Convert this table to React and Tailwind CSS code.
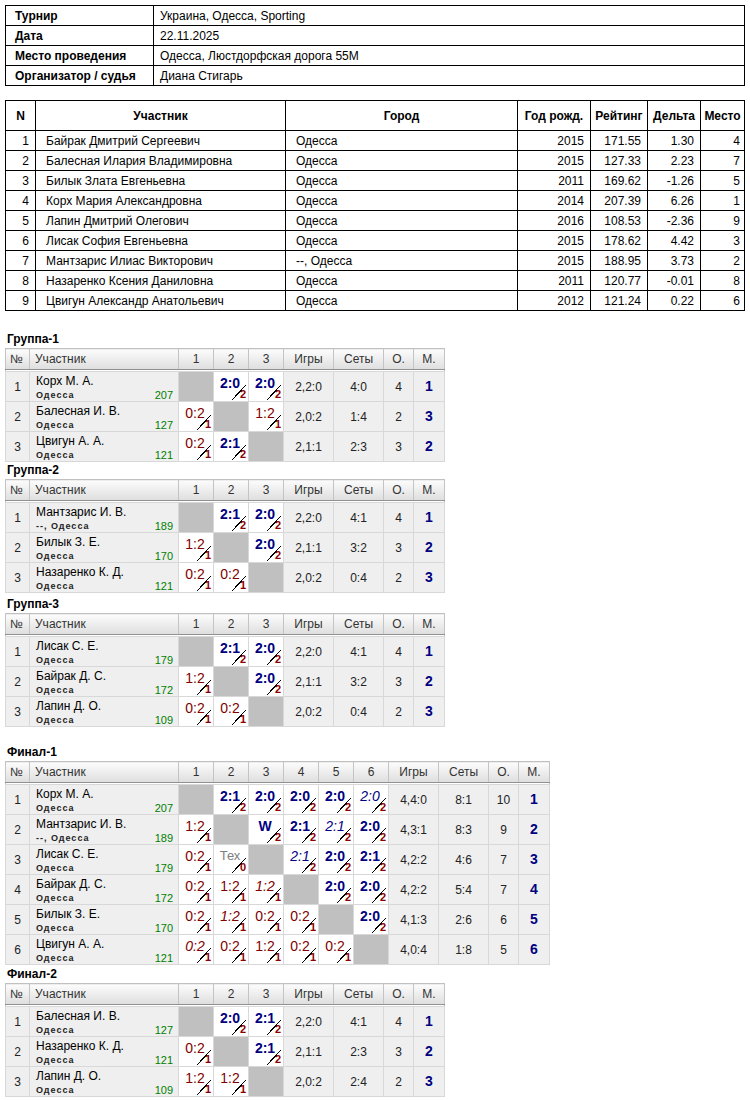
import React from "react";

const players = [
  [1, "Байрак Дмитрий Сергеевич", "Одесса", "2015", "171.55", "1.30", "4"],
  [2, "Балесная Илария Владимировна", "Одесса", "2015", "127.33", "2.23", "7"],
  [3, "Билык Злата Евгеньевна", "Одесса", "2011", "169.62", "-1.26", "5"],
  [4, "Корх Мария Александровна", "Одесса", "2014", "207.39", "6.26", "1"],
  [5, "Лапин Дмитрий Олегович", "Одесса", "2016", "108.53", "-2.36", "9"],
  [6, "Лисак София Евгеньевна", "Одесса", "2015", "178.62", "4.42", "3"],
  [7, "Мантзарис Илиас Викторович", "--, Одесса", "2015", "188.95", "3.73", "2"],
  [8, "Назаренко Ксения Даниловна", "Одесса", "2011", "120.77", "-0.01", "8"],
  [9, "Цвигун Александр Анатольевич", "Одесса", "2012", "121.24", "0.22", "6"],
];

// cell codes: null = diagonal; [kind, text, points]
// kinds: W bold win, w italic win, L loss, l italic loss, T tech
const groups = [
  {
    title: "Группа-1",
    rows: [
      ["Корх М. А.", "Одесса", "207", [null, ["W", "2:0", "2"], ["W", "2:0", "2"]], "2,2:0", "4:0", "4", "1"],
      ["Балесная И. В.", "Одесса", "127", [["L", "0:2", "1"], null, ["L", "1:2", "1"]], "2,0:2", "1:4", "2", "3"],
      ["Цвигун А. А.", "Одесса", "121", [["L", "0:2", "1"], ["W", "2:1", "2"], null], "2,1:1", "2:3", "3", "2"],
    ],
  },
  {
    title: "Группа-2",
    rows: [
      ["Мантзарис И. В.", "--, Одесса", "189", [null, ["W", "2:1", "2"], ["W", "2:0", "2"]], "2,2:0", "4:1", "4", "1"],
      ["Билык З. Е.", "Одесса", "170", [["L", "1:2", "1"], null, ["W", "2:0", "2"]], "2,1:1", "3:2", "3", "2"],
      ["Назаренко К. Д.", "Одесса", "121", [["L", "0:2", "1"], ["L", "0:2", "1"], null], "2,0:2", "0:4", "2", "3"],
    ],
  },
  {
    title: "Группа-3",
    rows: [
      ["Лисак С. Е.", "Одесса", "179", [null, ["W", "2:1", "2"], ["W", "2:0", "2"]], "2,2:0", "4:1", "4", "1"],
      ["Байрак Д. С.", "Одесса", "172", [["L", "1:2", "1"], null, ["W", "2:0", "2"]], "2,1:1", "3:2", "3", "2"],
      ["Лапин Д. О.", "Одесса", "109", [["L", "0:2", "1"], ["L", "0:2", "1"], null], "2,0:2", "0:4", "2", "3"],
    ],
  },
];

const final1 = {
  title: "Финал-1",
  rows: [
    ["Корх М. А.", "Одесса", "207", [null, ["W", "2:1", "2"], ["W", "2:0", "2"], ["W", "2:0", "2"], ["W", "2:0", "2"], ["w", "2:0", "2"]], "4,4:0", "8:1", "10", "1"],
    ["Мантзарис И. В.", "--, Одесса", "189", [["L", "1:2", "1"], null, ["W", "W", "2"], ["W", "2:1", "2"], ["w", "2:1", "2"], ["W", "2:0", "2"]], "4,3:1", "8:3", "9", "2"],
    ["Лисак С. Е.", "Одесса", "179", [["L", "0:2", "1"], ["T", "Тех", "0"], null, ["w", "2:1", "2"], ["W", "2:0", "2"], ["W", "2:1", "2"]], "4,2:2", "4:6", "7", "3"],
    ["Байрак Д. С.", "Одесса", "172", [["L", "0:2", "1"], ["L", "1:2", "1"], ["l", "1:2", "1"], null, ["W", "2:0", "2"], ["W", "2:0", "2"]], "4,2:2", "5:4", "7", "4"],
    ["Билык З. Е.", "Одесса", "170", [["L", "0:2", "1"], ["l", "1:2", "1"], ["L", "0:2", "1"], ["L", "0:2", "1"], null, ["W", "2:0", "2"]], "4,1:3", "2:6", "6", "5"],
    ["Цвигун А. А.", "Одесса", "121", [["l", "0:2", "1"], ["L", "0:2", "1"], ["L", "1:2", "1"], ["L", "0:2", "1"], ["L", "0:2", "1"], null], "4,0:4", "1:8", "5", "6"],
  ],
};

const final2 = {
  title: "Финал-2",
  rows: [
    ["Балесная И. В.", "Одесса", "127", [null, ["W", "2:0", "2"], ["W", "2:1", "2"]], "2,2:0", "4:1", "4", "1"],
    ["Назаренко К. Д.", "Одесса", "121", [["L", "0:2", "1"], null, ["W", "2:1", "2"]], "2,1:1", "2:3", "3", "2"],
    ["Лапин Д. О.", "Одесса", "109", [["L", "1:2", "1"], ["L", "1:2", "1"], null], "2,0:2", "2:4", "2", "3"],
  ],
};

function mainClass(kind) {
  if (kind === "W") return "font-bold text-[#000080] text-[14px]";
  if (kind === "w") return "italic text-[#000080] text-[14px]";
  if (kind === "L") return "text-[#800000] text-[14px]";
  if (kind === "l") return "italic text-[#800000] text-[14px]";
  return "text-[#808080] text-[13px]";
}

function ScoreCell({ c }) {
  if (!c) {
    return <td className="bg-[#c0c0c0] border border-[#d8d8d8] p-0" />;
  }
  const [kind, text, pts] = c;
  return (
    <td className="relative bg-white border border-[#d8d8d8] p-0">
      <span className={"absolute left-0 top-[3px] w-[32px] text-center leading-[16px] " + mainClass(kind)}>
        {text}
      </span>
      <svg className="absolute left-0 top-0" width="35" height="30" viewBox="0 0 35 30">
        <line x1="18" y1="28" x2="32" y2="13" stroke="#000" strokeWidth="1" shapeRendering="crispEdges" />
      </svg>
      <span className="absolute right-[2px] bottom-[1px] text-[11px] leading-[11px] font-bold text-[#8b0000]">{pts}</span>
    </td>
  );
}

function GroupTable({ g, six }) {
  const th = "h-[21px] p-0 font-normal text-[12px] text-[#333] border-x border-[#c4c4c4] bg-linear-to-b from-[#fcfcfc] to-[#dedede] border-b border-b-[#909090]";
  const n = six ? 6 : 3;
  const cols = six ? [1, 2, 3, 4, 5, 6] : [1, 2, 3];
  return (
    <div>
      <div className="h-[17px] pl-[7px] text-[12px] leading-[17px] font-bold text-black">{g.title}</div>
      <table className={"ml-[5px] table-fixed border-collapse border border-[#c0c0c0] text-[12px] text-[#222] " + (six ? "w-[543px]" : "w-[439px]")}>
        <colgroup>
          <col className="w-[24px]" />
          <col className="w-[149px]" />
          {cols.map((i) => (
            <col key={i} className="w-[35px]" />
          ))}
          <col className="w-[50px]" />
          <col className="w-[50px]" />
          <col className="w-[30px]" />
          <col className="w-[31px]" />
        </colgroup>
        <thead>
          <tr>
            <th className={th + " text-left pl-[4px]"}>№</th>
            <th className={th + " text-left pl-[5px]"}>Участник</th>
            {cols.map((i) => (
              <th key={i} className={th + " text-center"}>
                {i}
              </th>
            ))}
            <th className={th + " text-center"}>Игры</th>
            <th className={th + " text-center"}>Сеты</th>
            <th className={th + " text-center"}>О.</th>
            <th className={th + " text-center"}>М.</th>
          </tr>
          <tr className="h-[2px]">
            <td colSpan={n + 6} className="p-0 h-[2px] bg-white" />
          </tr>
        </thead>
        <tbody>
          {g.rows.map((r, idx) => (
            <tr key={idx} className="h-[30px]">
              <td className="bg-[#efefef] border border-[#d8d8d8] text-center p-0 text-[12px]">{idx + 1}</td>
              <td className="bg-[#efefef] border border-[#d8d8d8] pl-[6px] pr-[5px] py-0 align-top">
                <div className="pt-[2px] text-[12px] leading-[15px] text-black whitespace-nowrap">{r[0]}</div>
                <div className="flex justify-between items-end leading-[12px]">
                  <span className="text-[9px] font-bold tracking-[1px] text-[#222]">{r[1]}</span>
                  <span className="text-[11px] text-[#008000]">{r[2]}</span>
                </div>
              </td>
              {r[3].map((c, j) => (
                <ScoreCell key={j} c={c} />
              ))}
              <td className="bg-[#efefef] border border-[#d8d8d8] text-center p-0">{r[4]}</td>
              <td className="bg-[#efefef] border border-[#d8d8d8] text-center p-0">{r[5]}</td>
              <td className="bg-[#efefef] border border-[#d8d8d8] text-center p-0">{r[6]}</td>
              <td className="bg-[#efefef] border border-[#d8d8d8] text-center p-0 text-[14px] font-bold text-[#000080]">{r[7]}</td>
            </tr>
          ))}
        </tbody>
      </table>
    </div>
  );
}

export default function App() {
  const info = [
    ["Турнир", "Украина, Одесса, Sporting"],
    ["Дата", "22.11.2025"],
    ["Место проведения", "Одесса, Люстдорфская дорога 55М"],
    ["Организатор / судья", "Диана Стигарь"],
  ];
  const hd = "border border-black font-bold text-center p-0";
  const td = "border border-black p-0";
  return (
    <div className="w-[750px] bg-white text-black font-[Liberation_Sans,Arial,sans-serif] text-[12px] pt-[5px] pb-[4px]">
      <table className="ml-[5px] w-[740px] table-fixed border-collapse">
        <colgroup>
          <col className="w-[148px]" />
          <col />
        </colgroup>
        <tbody>
          {info.map(([a, b]) => (
            <tr key={a} className="h-[20px]">
              <td className="border border-black font-bold pl-[9px] py-0">{a}</td>
              <td className="border border-black pl-[6px] py-0">{b}</td>
            </tr>
          ))}
        </tbody>
      </table>

      <table className="ml-[5px] mt-[14px] w-[739px] table-fixed border-collapse">
        <colgroup>
          <col className="w-[30px]" />
          <col className="w-[250px]" />
          <col className="w-[232px]" />
          <col className="w-[73px]" />
          <col className="w-[57px]" />
          <col className="w-[53px]" />
          <col className="w-[44px]" />
        </colgroup>
        <thead>
          <tr className="h-[30px]">
            <th className={hd}>N</th>
            <th className={hd}>Участник</th>
            <th className={hd}>Город</th>
            <th className={hd}>Год рожд.</th>
            <th className={hd}>Рейтинг</th>
            <th className={hd}>Дельта</th>
            <th className={hd}>Место</th>
          </tr>
        </thead>
        <tbody>
          {players.map((p) => (
            <tr key={p[0]} className="h-[20px]">
              <td className={td + " text-right pr-[6px]"}>{p[0]}</td>
              <td className={td + " pl-[10px]"}>{p[1]}</td>
              <td className={td + " pl-[10px]"}>{p[2]}</td>
              <td className={td + " text-right pr-[6px]"}>{p[3]}</td>
              <td className={td + " text-right pr-[6px]"}>{p[4]}</td>
              <td className={td + " text-right pr-[6px]"}>{p[5]}</td>
              <td className={td + " text-right pr-[4px]"}>{p[6]}</td>
            </tr>
          ))}
        </tbody>
      </table>

      <div className="mt-[20px] flex flex-col">
        <GroupTable g={groups[0]} />
        <GroupTable g={groups[1]} />
        <div className="mt-[3px]">
          <GroupTable g={groups[2]} />
        </div>
        <div className="mt-[17px]">
          <GroupTable g={final1} six />
        </div>
        <div className="mt-[1px]">
          <GroupTable g={final2} />
        </div>
      </div>
    </div>
  );
}
